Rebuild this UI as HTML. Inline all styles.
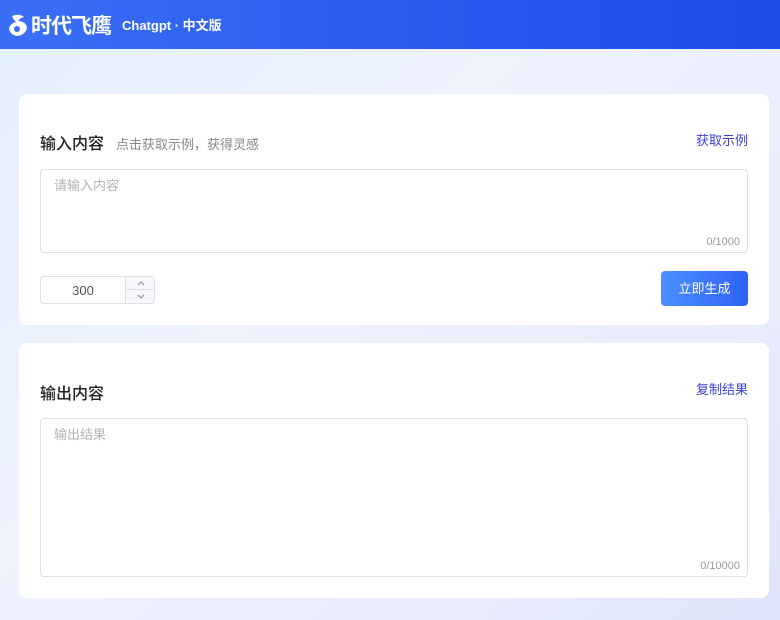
<!DOCTYPE html>
<html><head><meta charset="utf-8"><style>
*{margin:0;padding:0;box-sizing:border-box}
body{width:780px;height:620px;overflow:hidden;font-family:"Liberation Sans","Noto Sans CJK SC",sans-serif;background:linear-gradient(135deg,#e4effd 0%,#eef3fe 40%,#eaeefc 70%,#dfe4fb 100%);position:relative}
.hdr{height:49px;background:linear-gradient(90deg,#3a6ff5 0%,#2a5cf0 50%,#1d4de6 100%);display:flex;align-items:center;color:#fff}
.logo{margin-left:7px;font-size:21px;font-weight:bold;letter-spacing:-1px;display:flex;align-items:center}
.sub{margin-left:11px;font-size:13px;font-weight:bold}
.card{position:absolute;left:19px;width:750px;background:#fff;border-radius:8px}
.t{position:absolute;left:21px;font-size:16px;color:#222;font-weight:500}
.hint{font-size:13px;color:#888;margin-left:12px;font-weight:normal}
.lnk{position:absolute;right:21px;font-size:13px;color:#3a3fd6}
.ta{position:absolute;left:21px;right:21px;border:1px solid #dcdfe6;border-radius:4px}
.ph{position:absolute;left:13px;top:5px;font-size:13px;color:#b0b3b8}
.cnt{position:absolute;right:7px;bottom:4px;font-size:11px;color:#999}
</style></head><body>
<div class="hdr"><div class="logo"><svg width="22" height="24" viewBox="0 0 22 24"><path d="M5 3 Q12 0 17 4 Q13 5 11 8 Q18 8 20 14 Q19 22 10 23 Q3 22 2 15 Q4 10 9 9 Q6 6 5 3Z" fill="#fff"/><circle cx="10" cy="16" r="3" fill="#3a6ff5"/></svg><span style="margin-left:2px">时代飞鹰</span></div><div class="sub">Chatgpt · 中文版</div></div>
<div class="card" style="top:94px;height:231px">
<div class="t" style="top:36px">输入内容<span class="hint">点击获取示例，获得灵感</span></div>
<div class="lnk" style="top:36px">获取示例</div>
<div class="ta" style="top:75px;height:84px"><div class="ph">请输入内容</div><div class="cnt">0/1000</div></div>
<div style="position:absolute;left:21px;top:182px;width:115px;height:28px;border:1px solid #dcdfe6;border-radius:4px;overflow:hidden">
<div style="position:absolute;left:0;width:84px;top:6px;text-align:center;font-size:13px;color:#555">300</div>
<div style="position:absolute;left:84px;top:0;width:30px;height:26px;background:#f5f7fa;border-left:1px solid #dcdfe6">
<div style="height:13px;border-bottom:1px solid #dcdfe6;display:flex;align-items:center;justify-content:center"><svg width="8" height="5" viewBox="0 0 8 5"><path d="M1 4L4 1L7 4" fill="none" stroke="#888" stroke-width="1"/></svg></div>
<div style="height:13px;display:flex;align-items:center;justify-content:center"><svg width="8" height="5" viewBox="0 0 8 5"><path d="M1 1L4 4L7 1" fill="none" stroke="#888" stroke-width="1"/></svg></div></div></div>
<div style="position:absolute;right:21px;top:177px;width:87px;height:35px;border-radius:4px;background:linear-gradient(90deg,#4a90ff,#2f62f5);color:#fff;font-size:13px;text-align:center;line-height:35px">立即生成</div>
</div>
<div class="card" style="top:343px;height:255px">
<div class="t" style="top:37px">输出内容</div>
<div class="lnk" style="top:36px">复制结果</div>
<div class="ta" style="top:75px;height:159px"><div class="ph">输出结果</div><div class="cnt">0/10000</div></div>
</div>
</body></html>
